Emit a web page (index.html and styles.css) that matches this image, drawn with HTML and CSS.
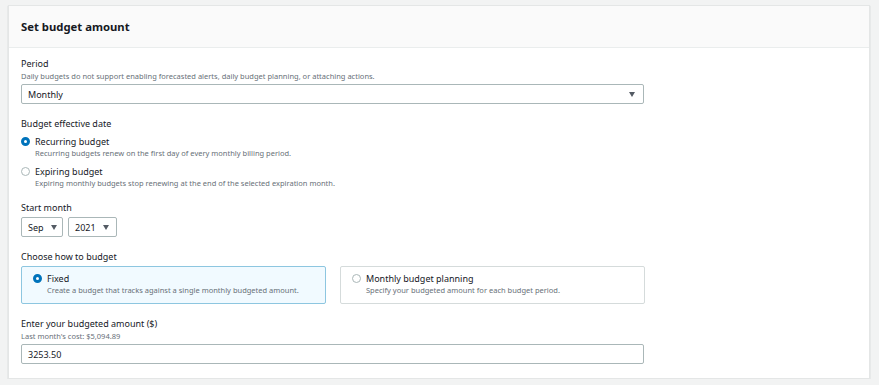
FILE: index.html
```html
<!DOCTYPE html>
<html lang="en">
<head>
    <meta charset="UTF-8">
    <title>Set budget amount</title>
    <link rel="stylesheet" href="styles.css">
</head>
<body>
    <div class="container">
        <div class="header">
            <h2>Set budget amount</h2>
        </div>

        <div class="content">
            <div class="field">
                <div class="label">Period</div>
                <div class="hint">Daily budgets do not support enabling forecasted alerts, daily budget planning, or attaching actions.</div>
                <div class="select wide">
                    <span>Monthly</span>
                    <span class="caret"></span>
                </div>
            </div>

            <div class="field">
                <div class="label">Budget effective date</div>
                <div class="radio-row first">
                    <span class="radio checked"></span>
                    <span class="radio-text">Recurring budget</span>
                </div>
                <div class="hint indent">Recurring budgets renew on the first day of every monthly billing period.</div>
                <div class="radio-row">
                    <span class="radio"></span>
                    <span class="radio-text">Expiring budget</span>
                </div>
                <div class="hint indent">Expiring monthly budgets stop renewing at the end of the selected expiration month.</div>
            </div>

            <div class="field">
                <div class="label">Start month</div>
                <div class="select-group">
                    <div class="select small month">
                        <span>Sep</span>
                        <span class="caret"></span>
                    </div>
                    <div class="select small year">
                        <span>2021</span>
                        <span class="caret"></span>
                    </div>
                </div>
            </div>

            <div class="field">
                <div class="label">Choose how to budget</div>
                <div class="tiles">
                    <div class="tile selected">
                        <div class="radio-row">
                            <span class="radio checked"></span>
                            <span class="radio-text">Fixed</span>
                        </div>
                        <div class="hint indent">Create a budget that tracks against a single monthly budgeted amount.</div>
                    </div>
                    <div class="tile">
                        <div class="radio-row">
                            <span class="radio"></span>
                            <span class="radio-text">Monthly budget planning</span>
                        </div>
                        <div class="hint indent">Specify your budgeted amount for each budget period.</div>
                    </div>
                </div>
            </div>

            <div class="field">
                <div class="label">Enter your budgeted amount ($)</div>
                <div class="hint">Last month's cost: $5,094.89</div>
                <div class="input wide">3253.50</div>
            </div>
        </div>
    </div>
</body>
</html>
```

FILE: styles.css
```css
body {
    margin: 0;
    background-color: #f2f3f3;
    font-family: "Noto Sans", "Open Sans", Arial, sans-serif;
    color: #16191f;
}
.container {
    margin: 5px 9px 0 8px;
    background-color: white;
    border: 1px solid #e4e6e6;
    box-shadow: 0 1px 1px rgba(0,28,36,0.25);
}
.header {
    height: 41px;
    background-color: #fafafa;
    border-bottom: 1px solid #eaeded;
    display: flex;
    align-items: center;
    padding: 0 12px;
}
.header h2 {
    margin: 0;
    font-size: 11.3px;
    font-weight: bold;
}
.content {
    padding: 9px 12px 14px;
}
.field {
    margin-bottom: 13px;
}
.field:last-child {
    margin-bottom: 0;
}
.label {
    font-size: 9px;
    line-height: 14px;
}
.hint {
    font-size: 7.5px;
    line-height: 10px;
    color: #687078;
}
.indent {
    padding-left: 14px;
}
.select, .input {
    box-sizing: border-box;
    height: 20px;
    border: 1px solid #aab7b8;
    border-radius: 2px;
    font-size: 9px;
    display: flex;
    align-items: center;
    justify-content: space-between;
    padding: 0 8px 0 6px;
    margin-top: 3px;
}
.wide {
    width: 623px;
}
.caret {
    width: 0;
    height: 0;
    border-left: 3.5px solid transparent;
    border-right: 3.5px solid transparent;
    border-top: 5px solid #545b64;
}
.select-group {
    display: flex;
    gap: 5px;
    margin-top: 2px;
}
.select-group .select {
    margin-top: 0;
    justify-content: flex-start;
    gap: 7px;
}
.month {
    width: 42px;
}
.year {
    width: 49px;
}
.radio-row {
    display: flex;
    align-items: center;
    height: 14px;
    margin-top: 6px;
}
.radio-row.first {
    margin-top: 3px;
}
.radio {
    box-sizing: border-box;
    width: 9px;
    height: 9px;
    border-radius: 50%;
    border: 1px solid #aab7b8;
    background-color: white;
    margin-right: 5px;
}
.radio.checked {
    border: 3px solid #0073bb;
}
.radio-text {
    font-size: 9px;
}
.tiles {
    display: flex;
    gap: 14px;
    margin-top: 2px;
}
.tile {
    box-sizing: border-box;
    width: 305px;
    height: 38px;
    border: 1px solid #d5dbdb;
    border-radius: 2px;
    padding: 4px 11px;
}
.tile.selected {
    background-color: #f1faff;
    border-color: #8dc6e0;
}
.tile .radio-row {
    margin-top: 0;
}
.input {
    justify-content: flex-start;
}
```
